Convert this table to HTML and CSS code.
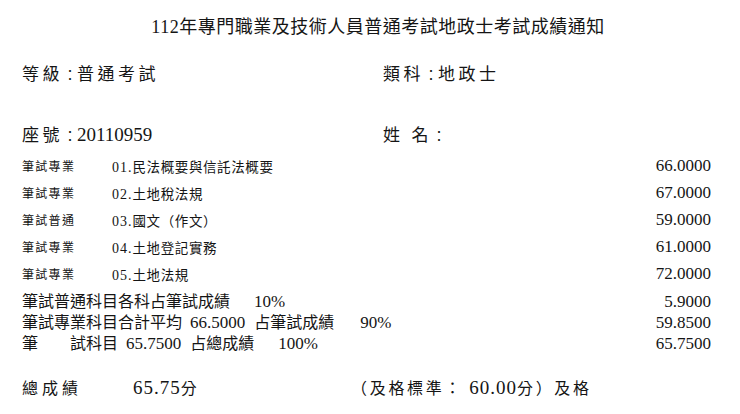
FILE: index.html
```html
<!DOCTYPE html>
<html lang="zh-Hant">
<head>
<meta charset="utf-8">
<title>成績通知</title>
<link rel="stylesheet" href="styles.css">
</head>
<body>
<div class="page">
  <h1 class="title">112年專門職業及技術人員普通考試地政士考試成績通知</h1>

  <div class="info info-1">
    <div class="field field-left">等級<span class="colon">：</span>普通考試</div>
    <div class="field">類科<span class="colon">：</span>地政士</div>
  </div>
  <div class="info info-2">
    <div class="field field-left">座號<span class="colon">：</span><span class="seat">20110959</span></div>
    <div class="field">姓<span class="half"></span>名<span class="colon">：</span></div>
  </div>

  <div class="subjects">
    <div class="subj-row"><span class="cat">筆試專業</span><span class="subj"><span class="no">01.</span>民法概要與信託法概要</span><span class="score">66.0000</span></div>
    <div class="subj-row"><span class="cat">筆試專業</span><span class="subj"><span class="no">02.</span>土地稅法規</span><span class="score">67.0000</span></div>
    <div class="subj-row"><span class="cat">筆試普通</span><span class="subj"><span class="no">03.</span>國文（作文）</span><span class="score">59.0000</span></div>
    <div class="subj-row"><span class="cat">筆試專業</span><span class="subj"><span class="no">04.</span>土地登記實務</span><span class="score">61.0000</span></div>
    <div class="subj-row"><span class="cat">筆試專業</span><span class="subj"><span class="no">05.</span>土地法規</span><span class="score">72.0000</span></div>
  </div>

  <div class="summary">
    <div class="sum-line">
      <span>筆試普通科目各科占筆試成績</span>
      <span class="num gap24">10%</span>
      <span class="num val">5.9000</span>
    </div>
    <div class="sum-line">
      <span>筆試專業科目合計平均</span>
      <span class="num gap8">66.5000</span>
      <span class="gap9">占筆試成績</span>
      <span class="num gap26">90%</span>
      <span class="num val">59.8500</span>
    </div>
    <div class="sum-line">
      <span>筆</span>
      <span class="gap32">試科目</span>
      <span class="num gap8">65.7500</span>
      <span class="gap9">占總成績</span>
      <span class="num gap24">100%</span>
      <span class="num val">65.7500</span>
    </div>
  </div>

  <div class="total">
    <span class="total-label">總成績</span>
    <span class="total-score"><span class="bignum">65.75</span>分</span>
    <span class="standard">（及格標準：<span class="bignum std-num">60.00</span>分）及格</span>
  </div>
</div>
</body>
</html>
```

FILE: styles.css
```css
html, body {
  margin: 0;
  padding: 0;
  background: #ffffff;
}

body {
  color: #151515;
  font-family: "Liberation Serif", "Noto Sans CJK TC", serif;
}

.page {
  width: 740px;
  height: 414px;
  box-sizing: border-box;
  padding: 0 29px 0 22px;
  overflow: hidden;
}

.title {
  margin: 17px 0 0 23px;
  font-size: 18px;
  font-weight: normal;
  line-height: 20px;
  text-align: center;
  letter-spacing: 0.5px;
}

.info {
  display: flex;
  align-items: baseline;
  font-size: 17px;
  line-height: 24px;
  letter-spacing: 3.5px;
}

.info-1 {
  margin-top: 26px;
}

.info-2 {
  margin-top: 35px;
}

.field-left {
  width: 361px;
}

.colon {
  display: inline-block;
  width: 14px;
  font-size: 14px;
  letter-spacing: 0;
  text-align: center;
}

.half {
  display: inline-block;
  width: 8px;
}

.seat {
  font-size: 19px;
  letter-spacing: 0;
}

.subjects {
  margin-top: 3px;
}

.subj-row {
  display: flex;
  align-items: center;
  height: 27px;
}

.cat {
  width: 90px;
  font-size: 12px;
  letter-spacing: 1.3px;
}

.subj {
  flex: 1;
  font-size: 13.5px;
  letter-spacing: 0.6px;
}

.no {
  font-size: 14px;
  letter-spacing: 1px;
}

.score {
  font-size: 17px;
}

.summary {
  margin-top: 4px;
  font-size: 16px;
  line-height: 21px;
}

.sum-line {
  display: flex;
  align-items: baseline;
  height: 21px;
}

.num {
  font-size: 17px;
}

.val {
  margin-left: auto;
}

.gap8 { margin-left: 8px; }
.gap9 { margin-left: 9px; }
.gap24 { margin-left: 24px; }
.gap26 { margin-left: 26px; }
.gap32 { margin-left: 32px; }

.total {
  display: flex;
  align-items: baseline;
  margin-top: 22px;
  font-size: 16px;
  line-height: 24px;
}

.total-label {
  width: 111px;
  letter-spacing: 4px;
}

.total-score {
  width: 218px;
}

.bignum {
  font-size: 19px;
  letter-spacing: 1px;
}

.standard {
  letter-spacing: 2.7px;
}

.std-num {
  margin-left: 6px;
}
```
